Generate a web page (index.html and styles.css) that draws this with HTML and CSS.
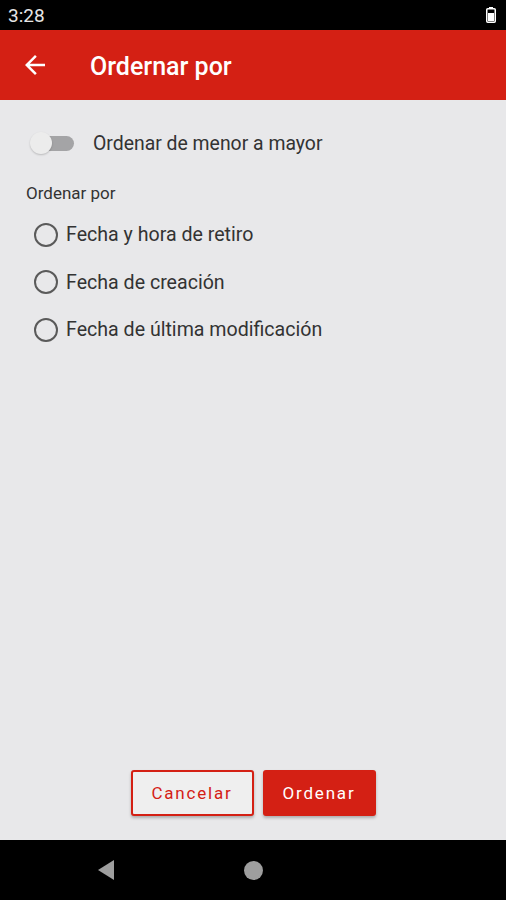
FILE: index.html
```html
<!DOCTYPE html>
<html lang="es">
<head>
    <meta charset="UTF-8">
    <title>Ordenar por</title>
    <link rel="stylesheet" href="styles.css">
</head>
<body>
    <div class="screen">
        <div class="status-bar">
            <span class="time">3:28</span>
            <svg class="battery" width="10" height="16" viewBox="0 0 10 16">
                <rect x="3" y="0" width="4" height="2" fill="#fff"/>
                <rect x="0.75" y="1.75" width="8.5" height="13.5" rx="1" fill="none" stroke="#fff" stroke-width="1.5"/>
                <rect x="2" y="6" width="6" height="8" fill="#fff"/>
            </svg>
        </div>
        <div class="app-bar">
            <svg class="back" width="30" height="30" viewBox="0 0 24 24">
                <path d="M20 11H7.83l5.59-5.59L12 4l-8 8 8 8 1.41-1.41L7.83 13H20v-2z" fill="#fff"/>
            </svg>
            <h1 class="title">Ordernar por</h1>
        </div>
        <div class="content">
            <div class="switch-row">
                <div class="switch">
                    <div class="track"></div>
                    <div class="thumb"></div>
                </div>
                <span class="switch-label">Ordenar de menor a mayor</span>
            </div>
            <div class="section-label">Ordenar por</div>
            <div class="radio-list">
                <div class="radio-row"><span class="radio"></span><span class="radio-label">Fecha y hora de retiro</span></div>
                <div class="radio-row"><span class="radio"></span><span class="radio-label">Fecha de creación</span></div>
                <div class="radio-row"><span class="radio"></span><span class="radio-label">Fecha de última modificación</span></div>
            </div>
            <div class="actions">
                <button class="btn btn-outline">Cancelar</button>
                <button class="btn btn-fill">Ordenar</button>
            </div>
        </div>
        <div class="nav-bar">
            <svg width="20" height="22" viewBox="0 0 20 22" class="nav-back">
                <path d="M18 1L2 11l16 10z" fill="#9e9e9e"/>
            </svg>
            <span class="nav-home"></span>
        </div>
    </div>
</body>
</html>
```

FILE: styles.css
```css
body {
    margin: 0;
    font-family: Roboto, sans-serif;
    background: #e8e8ea;
}
.screen {
    width: 506px;
    height: 900px;
    display: flex;
    flex-direction: column;
}
.status-bar {
    height: 30px;
    background: #000;
    display: flex;
    align-items: center;
    justify-content: space-between;
    padding: 0 10px 0 8px;
}
.time {
    color: #e6e6e6;
    font-size: 19px;
}
.app-bar {
    height: 70px;
    background: #d42014;
    display: flex;
    align-items: center;
    padding-left: 20px;
}
.title {
    margin: 2px 0 0 40px;
    color: #fff;
    font-size: 25px;
    font-weight: 500;
}
.content {
    flex: 1;
    display: flex;
    flex-direction: column;
    padding: 0 0 0 26px;
}
.switch-row {
    display: flex;
    align-items: center;
    height: 40px;
    margin-top: 23px;
}
.switch {
    position: relative;
    width: 48px;
    height: 24px;
    margin-left: 2px;
}
.track {
    position: absolute;
    left: 8px;
    top: 5px;
    width: 38px;
    height: 15px;
    border-radius: 8px;
    background: #a4a4a6;
}
.thumb {
    position: absolute;
    left: 2px;
    top: 1px;
    width: 22px;
    height: 22px;
    border-radius: 50%;
    background: #ececec;
    box-shadow: 0 1px 2px rgba(0, 0, 0, 0.2);
}
.switch-label {
    margin-left: 17px;
    font-size: 19.4px;
    color: #333;
}
.section-label {
    margin-top: 20px;
    font-size: 17px;
    color: #333;
}
.radio-list {
    display: flex;
    flex-direction: column;
    margin-top: 8px;
}
.radio-row {
    display: flex;
    align-items: center;
    height: 47.5px;
    padding-left: 8px;
}
.radio {
    width: 20px;
    height: 20px;
    border: 2px solid #5a5a5a;
    border-radius: 50%;
}
.radio-label {
    margin-left: 8px;
    font-size: 19.6px;
    color: #333;
}
.actions {
    margin-top: auto;
    margin-bottom: 24px;
    display: flex;
    justify-content: center;
    gap: 9px;
    padding-right: 26px;
}
.btn {
    height: 46px;
    border-radius: 3px;
    font-family: Roboto, sans-serif;
    font-size: 17px;
    font-weight: 400;
    letter-spacing: 1.8px;
    box-shadow: 0 2px 3px rgba(0, 0, 0, 0.25);
}
.btn-outline {
    width: 123px;
    background: #efefef;
    border: 2px solid #d42014;
    color: #d42014;
}
.btn-fill {
    width: 113px;
    background: #d42014;
    border: 0;
    color: #fff;
}
.nav-bar {
    height: 60px;
    background: #000;
    display: flex;
    align-items: center;
    padding-left: 96px;
}
.nav-home {
    width: 19px;
    height: 19px;
    border-radius: 50%;
    background: #9e9e9e;
    margin-left: 128px;
}
```
